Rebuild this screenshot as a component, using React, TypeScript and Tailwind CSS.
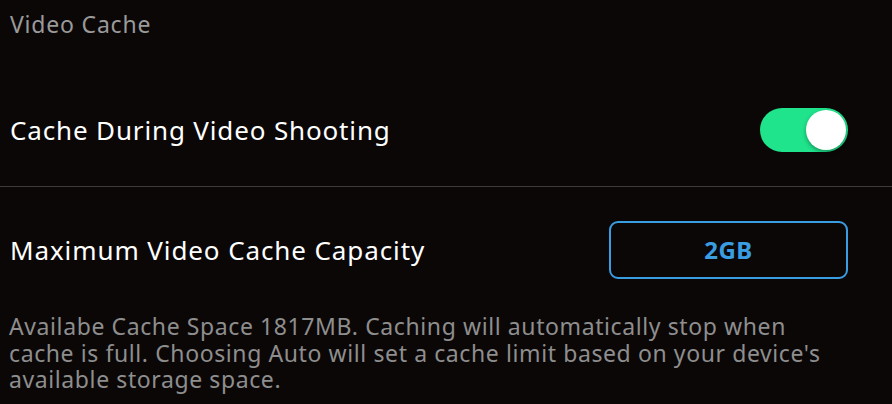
export default function App() {
  return (
    <div className="h-[404px] w-[892px] overflow-hidden bg-[#0b0707] font-['Noto_Sans',sans-serif] text-white">
      <div className="flex h-[48px] items-center px-[10px] text-[23px] tracking-[0.8px] text-[#9a9a9a]">Video Cache</div>

      <div className="flex h-[139px] items-center justify-between border-b border-[#3d3a3a] pl-[10px] pr-[44px] pt-[26px]">
        <span className="text-[26px] tracking-[0.85px] text-white">Cache During Video Shooting</span>
        <Toggle />
      </div>

      <div className="flex h-[124px] items-center justify-between pl-[10px] pr-[44px] pt-[2px]">
        <span className="text-[26px] tracking-[0.9px] text-white">Maximum Video Cache Capacity</span>
        <button
          type="button"
          className="flex h-[58px] w-[239px] items-center justify-center rounded-[9px] border-2 border-[#3a9de2] text-[24px] font-bold tracking-[0.5px] text-[#3a9de2]"
        >
          2GB
        </button>
      </div>

      <p className="w-[850px] pl-[9px] pt-[2px] text-[23px] leading-[26.5px] tracking-[0.6px] text-[#8e8e8e]">
        Availabe Cache Space 1817MB. Caching will automatically stop when cache is full. Choosing Auto will set a cache limit based on your device's available storage space.
      </p>
    </div>
  );
}

function Toggle() {
  return (
    <div className="relative h-[44px] w-[88px] rounded-full bg-[#1fe48b]">
      <span className="absolute right-[2px] top-[2px] h-[40px] w-[40px] rounded-full bg-white shadow-[0_2px_4px_rgba(0,0,0,0.35)]" />
    </div>
  );
}
